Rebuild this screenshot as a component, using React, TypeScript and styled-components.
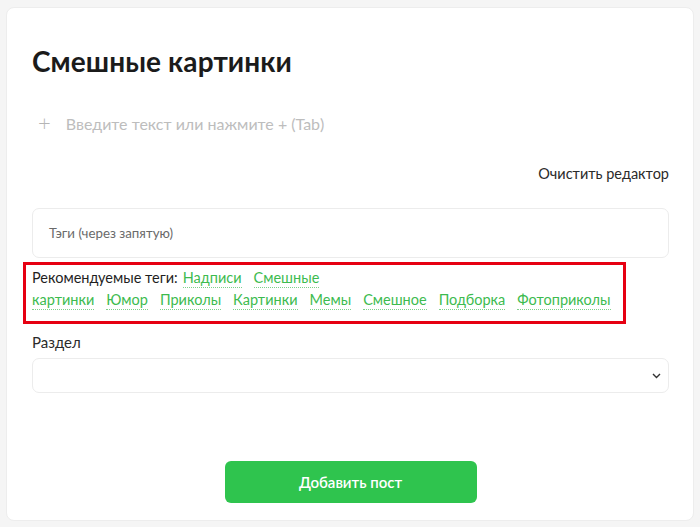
import React from "react";
import styled, { createGlobalStyle } from "styled-components";

const GlobalStyle = createGlobalStyle`
  html, body {
    margin: 0;
    padding: 0;
    background: #f5f5f5;
  }
  body {
    font-family: Lato, "Noto Sans", "Liberation Sans", sans-serif;
    color: #222;
  }
`;

const Page = styled.div`
  padding: 7px 6px 6px 6px;
`;

const Card = styled.div`
  background: #fff;
  border: 1px solid #ededed;
  border-radius: 8px;
  padding: 0 24px 17px 25px;
  height: 514px;
  box-sizing: border-box;
  display: flex;
  flex-direction: column;
`;

const Title = styled.h1`
  margin: 35px 0 0 0;
  font-size: 28px;
  line-height: 36px;
  font-weight: 700;
  color: #1b1b1b;
  letter-spacing: 0.1px;
`;

const EditorRow = styled.div`
  display: flex;
  align-items: center;
  gap: 15px;
  margin-top: 32px;
  height: 24px;
  padding-left: 6px;
`;

const Plus = styled.span`
  font-size: 22px;
  font-weight: 300;
  color: #b5b5b5;
  line-height: 24px;
`;

const Placeholder = styled.span`
  font-size: 16px;
  color: #bdbdbd;
`;

const ClearRow = styled.div`
  display: flex;
  justify-content: flex-end;
  margin-top: 29px;
`;

const ClearLink = styled.span`
  font-size: 14.5px;
  color: #2a2a2a;
  line-height: 20px;
`;

const TagsInput = styled.div`
  margin-top: 24px;
  height: 50px;
  box-sizing: border-box;
  border: 1px solid #ececec;
  border-radius: 7px;
  display: flex;
  align-items: center;
  padding-left: 16px;
  font-size: 13.3px;
  color: #6a6a6a;
`;

const Recommended = styled.div`
  margin: 4px 0 0 -9px;
  width: 603px;
  box-sizing: border-box;
  border: 3px solid #e60012;
  padding: 2px 6px 10px 6px;
  font-size: 14.5px;
  line-height: 22px;
`;

const RecLabel = styled.span`
  color: #1f1f1f;
  margin-right: 5px;
`;

const Tag = styled.span`
  color: #3dbb4f;
  border-bottom: 1px dotted #7fd08b;
  padding-bottom: 1px;
  margin-right: 12px;
`;

const Label = styled.div`
  margin-top: 8px;
  font-size: 15px;
  line-height: 20px;
  color: #2a2a2a;
`;

const Select = styled.div`
  margin-top: 6px;
  height: 35px;
  box-sizing: border-box;
  border: 1px solid #ececec;
  border-radius: 7px;
  display: flex;
  align-items: center;
  justify-content: flex-end;
  padding-right: 7px;
`;

const ButtonRow = styled.div`
  margin-top: auto;
  display: flex;
  justify-content: center;
`;

const Button = styled.button`
  width: 252px;
  height: 42px;
  border: none;
  border-radius: 6px;
  background: #2fc44e;
  color: #fff;
  font-family: inherit;
  font-size: 15px;
  font-weight: 600;
  cursor: pointer;
`;

const tags = ["Юмор", "Приколы", "Картинки", "Мемы", "Смешное", "Подборка", "Фотоприколы"];

export default function App() {
  return (
    <>
      <GlobalStyle />
      <Page>
        <Card>
          <Title>Смешные картинки</Title>
          <EditorRow>
            <Plus>+</Plus>
            <Placeholder>Введите текст или нажмите + (Tab)</Placeholder>
          </EditorRow>
          <ClearRow>
            <ClearLink>Очистить редактор</ClearLink>
          </ClearRow>
          <TagsInput>Тэги (через запятую)</TagsInput>
          <Recommended>
            <RecLabel>Рекомендуемые теги:</RecLabel>
            <Tag>Надписи</Tag>
            <Tag>
              Смешные
              <br />
              картинки
            </Tag>
            {tags.map((t) => (
              <Tag key={t}>{t}</Tag>
            ))}
          </Recommended>
          <Label>Раздел</Label>
          <Select>
            <svg width="9" height="6" viewBox="0 0 9 6">
              <path d="M1 1l3.5 3.5L8 1" fill="none" stroke="#333" strokeWidth="1.4" />
            </svg>
          </Select>
          <ButtonRow>
            <Button>Добавить пост</Button>
          </ButtonRow>
        </Card>
      </Page>
    </>
  );
}
